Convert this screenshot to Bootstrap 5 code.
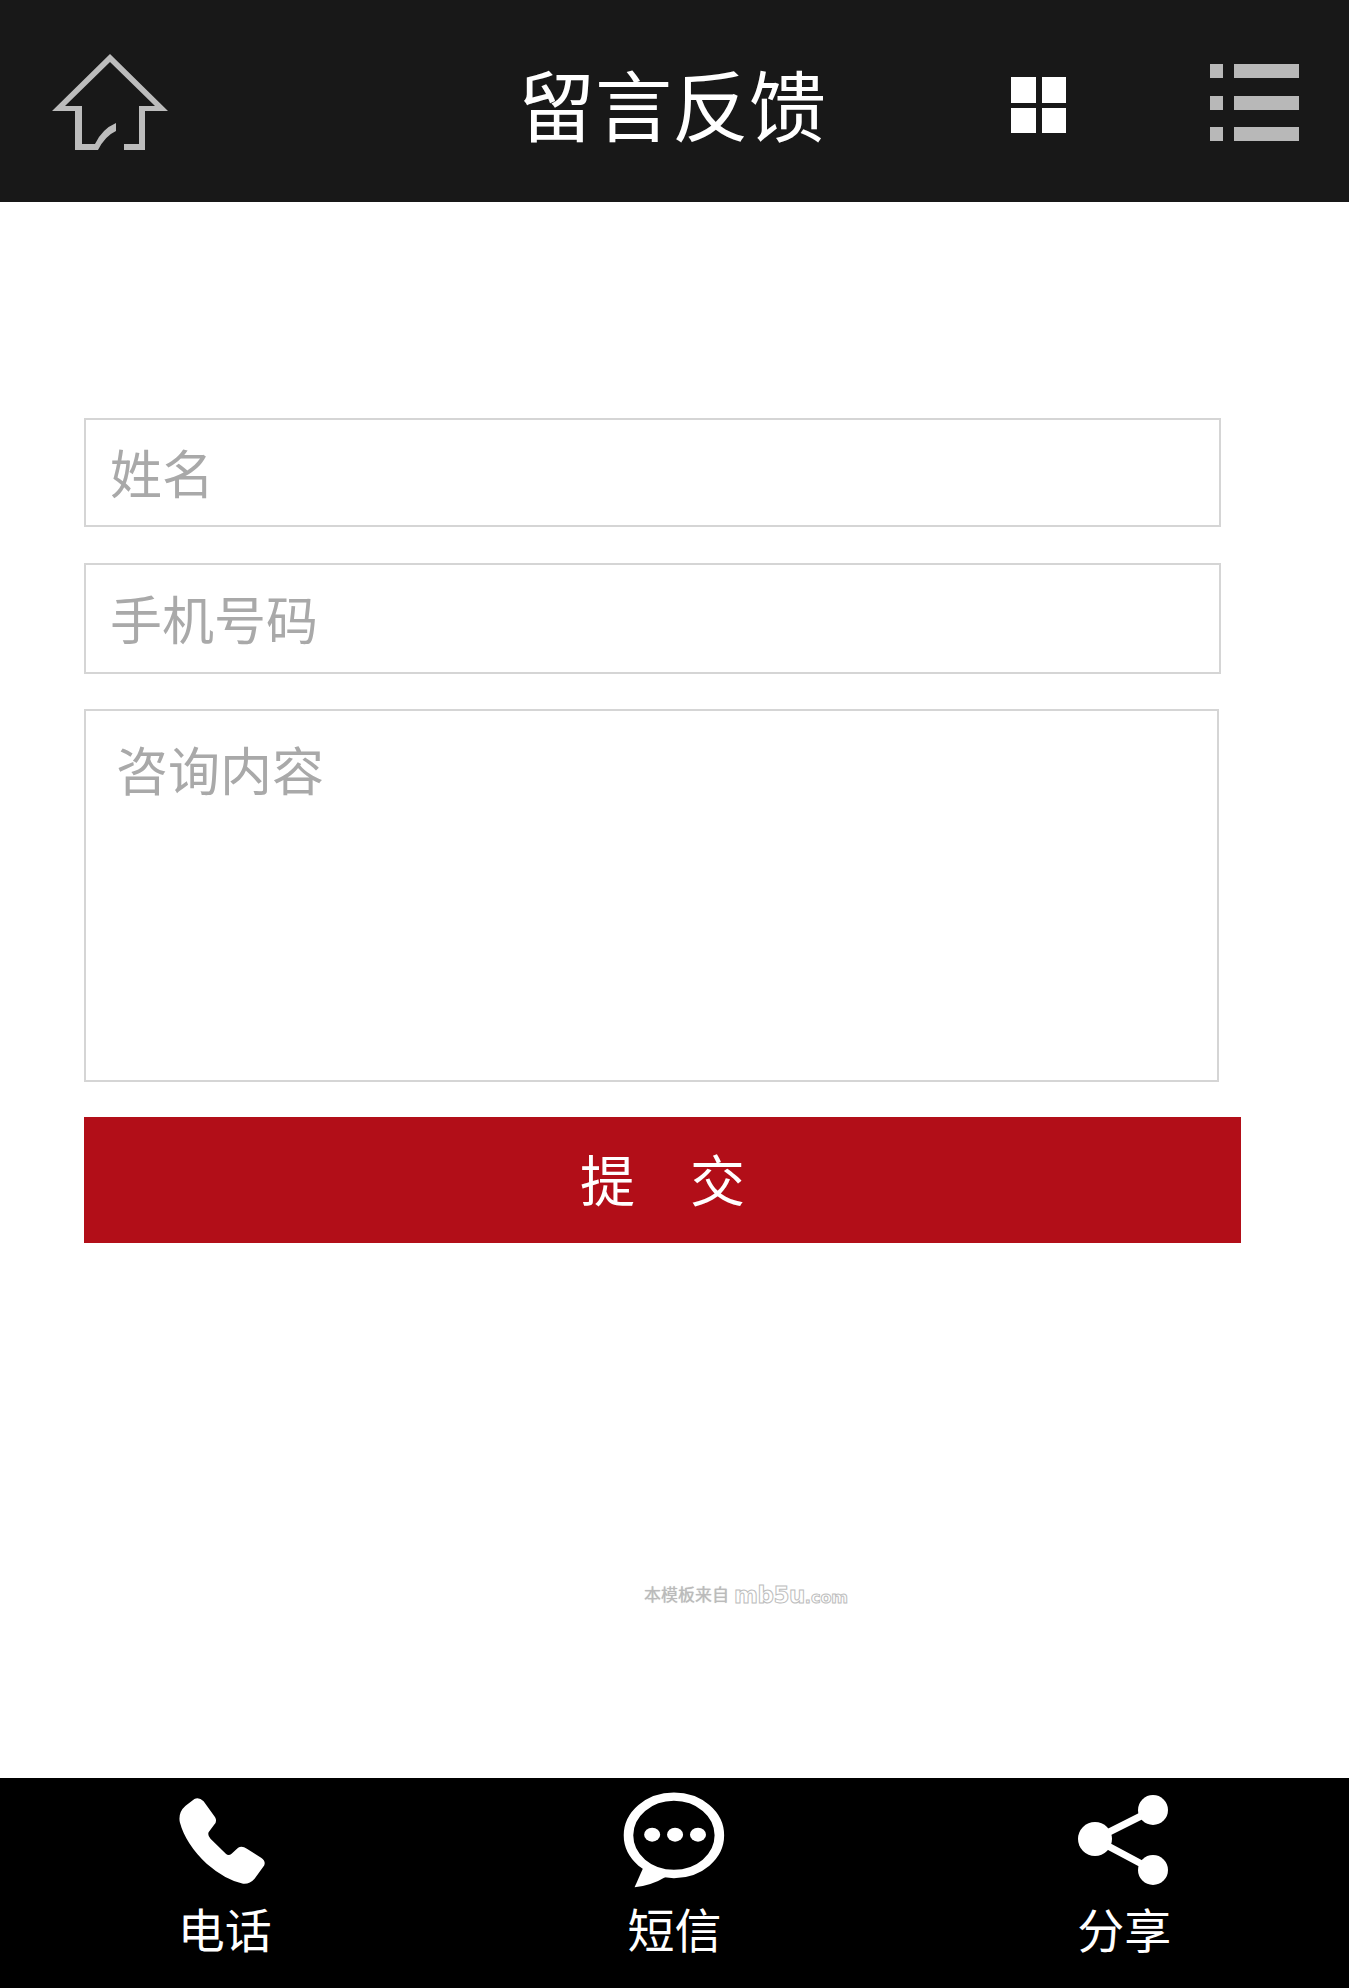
<!DOCTYPE html>
<html lang="zh-CN">
<head>
<meta charset="utf-8">
<title>留言反馈</title>
<link rel="stylesheet" href="https://cdn.jsdelivr.net/npm/bootstrap@5.3.0/dist/css/bootstrap.min.css">
<style>
body{font-family:"Liberation Sans","Noto Sans CJK SC",sans-serif;min-height:1988px;background:#fff}
.top-bar{height:202px;background:#181818;flex:none}
.home-ico{width:120px;height:105px;margin-left:50px;margin-top:0}
.page-title{font-size:77px;line-height:1;color:#fff;margin:16px 0 0 348px;font-weight:400;width:308px;white-space:nowrap}
.grid-ico{width:56px;height:57px;margin-left:185px;margin-top:9px}
.list-ico{width:89px;height:78px;margin-left:143px;margin-top:3px}
.form-wrap{padding:216px 0 0 84px}
.form-wrap .form-control{border:2px solid #d5d5d5;border-radius:0;font-size:52px;color:#333;box-shadow:none;font-family:inherit;font-weight:400}
.form-wrap .form-control::placeholder{color:#a9a9a9;opacity:1}
.fld-a{width:1137px;height:109px;padding:7px 24px 0;margin-bottom:36px;line-height:1.2}
.fld-b{width:1137px;height:111px;padding:6px 24px 0;margin-bottom:35px}
.form-wrap textarea.fld-c{width:1135px;height:373px;padding:29px 30px;margin-bottom:35px;resize:none;line-height:1.3;display:block;min-height:0}
.send-btn{width:1157px;height:126px;background:#b20e18;color:#fff;border:0;border-radius:0;font-size:55px;line-height:1;padding:5px 0 0;display:block}
.send-btn:hover{background:#b20e18;color:#fff}
.credit{margin:340px 0 0 644px;height:26px;color:#bbb;font-size:17px;line-height:26px;text-shadow:0 0 1px #bbb}
.credit-logo{font-size:23px;font-weight:700;color:#fff;margin-left:5px;-webkit-text-stroke:1px #bdbdbd;text-shadow:none;font-family:"DejaVu Sans",sans-serif;letter-spacing:-.5px}
.credit-logo small{font-size:16px;font-weight:700;letter-spacing:0}
.bottom-bar{height:210px;background:#000;flex:none;padding-top:12px}
.bar-ico{height:100px}
.bar-label{font-size:47px;line-height:1;color:#fff;margin-top:18px}
.ph-shift{margin-right:5px}
</style>
</head>
<body class="d-flex flex-column">
<header class="top-bar d-flex align-items-center">
  <svg class="home-ico" viewBox="50 50 120 105" aria-label="首页"><path fill="#bcbcbc" d="M110 55L168 112H145V151H124V145H139V107H155L110 63 65 107H82V145H95Q102 130 116 124V132Q105 137 98 151H75V112H52Z"/></svg>
  <h1 class="page-title">留言反馈</h1>
  <svg class="grid-ico" viewBox="0 0 56 57" aria-label="分类"><path fill="#fff" d="M0 0H25V26H0ZM31 0H55V26H31ZM0 31H25V56H0ZM31 31H55V56H31Z"/></svg>
  <svg class="list-ico" viewBox="0 0 89 78" aria-label="菜单"><path fill="#b8b8b8" d="M0 0H13V14H0ZM24 0H89V14H24ZM0 32H13V46H0ZM24 32H89V46H24ZM0 63H13V77H0ZM24 63H89V77H24Z"/></svg>
</header>
<main class="flex-grow-1">
  <form class="form-wrap">
    <input class="form-control fld-a" type="text" placeholder="姓名">
    <input class="form-control fld-b" type="text" placeholder="手机号码">
    <textarea class="form-control fld-c" placeholder="咨询内容"></textarea>
    <button class="btn send-btn" type="button">提　交</button>
  </form>
  <div class="credit d-flex align-items-center">本模板来自<span class="credit-logo">mb5u<small>.com</small></span></div>
</main>
<footer class="bottom-bar row g-0 text-center">
  <div class="col-4 d-flex flex-column align-items-center">
    <div class="bar-ico d-flex align-items-center ph-shift">
      <svg width="92" height="93" viewBox="70 70 240 280" preserveAspectRatio="none"><path fill="#fff" d="M118 85Q130 78 142 92L172 140Q178 152 170 162L155 185Q152 195 160 205L200 250Q207 258 215 250L232 232Q242 225 255 235L292 262Q305 272 300 285L275 325Q262 342 245 340Q200 330 150 280Q95 220 80 155Q75 125 95 105Z"/></svg>
    </div>
    <div class="bar-label">电话</div>
  </div>
  <div class="col-4 d-flex flex-column align-items-center">
    <div class="bar-ico d-flex align-items-center">
      <svg width="105" height="100" viewBox="1235 60 275 300" preserveAspectRatio="none"><path fill="#fff" d="M1290 295L1268 352Q1315 345 1350 320Z"/><ellipse cx="1371" cy="196" rx="119" ry="116" fill="#000" stroke="#fff" stroke-width="25"/><circle cx="1314" cy="194" r="21" fill="#fff"/><circle cx="1374" cy="194" r="21" fill="#fff"/><circle cx="1434" cy="194" r="21" fill="#fff"/></svg>
    </div>
    <div class="bar-label">短信</div>
  </div>
  <div class="col-4 d-flex flex-column align-items-center">
    <div class="bar-ico d-flex align-items-center">
      <svg width="92" height="92" viewBox="0 0 92 92"><path stroke="#fff" stroke-width="7" fill="none" d="M75 16L17 45 75 76"/><circle cx="75" cy="16" r="15" fill="#fff"/><circle cx="17" cy="45" r="17" fill="#fff"/><circle cx="75" cy="76" r="15" fill="#fff"/></svg>
    </div>
    <div class="bar-label">分享</div>
  </div>
</footer>
<script src="https://cdn.jsdelivr.net/npm/bootstrap@5.3.0/dist/js/bootstrap.bundle.min.js"></script>
</body>
</html>
